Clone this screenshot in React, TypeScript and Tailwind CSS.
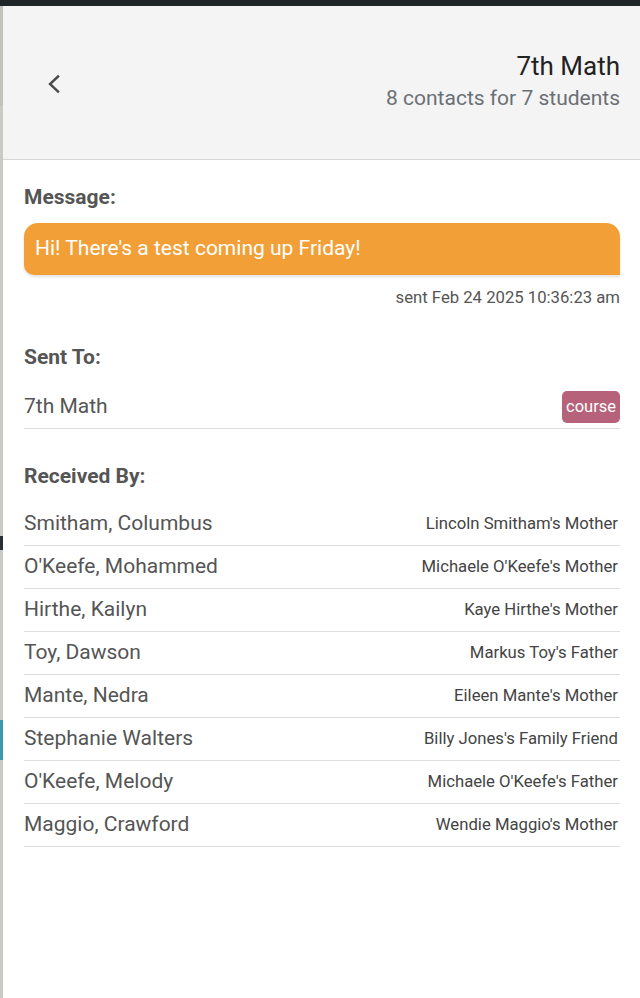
import React from 'react';

interface Recipient {
  name: string;
  relation: string;
}

const recipients: Recipient[] = [
  { name: 'Smitham, Columbus', relation: "Lincoln Smitham's Mother" },
  { name: "O'Keefe, Mohammed", relation: "Michaele O'Keefe's Mother" },
  { name: 'Hirthe, Kailyn', relation: "Kaye Hirthe's Mother" },
  { name: 'Toy, Dawson', relation: "Markus Toy's Father" },
  { name: 'Mante, Nedra', relation: "Eileen Mante's Mother" },
  { name: 'Stephanie Walters', relation: "Billy Jones's Family Friend" },
  { name: "O'Keefe, Melody", relation: "Michaele O'Keefe's Father" },
  { name: 'Maggio, Crawford', relation: "Wendie Maggio's Mother" },
];

const BackChevron: React.FC = () => (
  <svg width="14" height="20" viewBox="0 0 14 20" fill="none">
    <polyline
      points="11,2.5 3,10 11,17.5"
      stroke="#4a4a4a"
      strokeWidth="2.4"
      strokeLinecap="square"
      strokeLinejoin="miter"
    />
  </svg>
);

const App: React.FC = () => {
  return (
    <div className="w-[640px] h-[998px] flex flex-col bg-white overflow-hidden font-['Roboto','Liberation_Sans',sans-serif]">
      {/* window top bar */}
      <div className="h-[6px] shrink-0 bg-[#1f2426]" />

      <div className="flex flex-1 min-h-0">
        {/* sliver of the page behind the panel */}
        <div className="w-[3px] shrink-0 flex flex-col bg-[#c9c9c6]">
          <div className="h-[100px] bg-[#c2c2b8]" />
          <div className="h-[430px]" />
          <div className="h-[14px] bg-[#2a2f33]" />
          <div className="h-[170px]" />
          <div className="h-[40px] bg-[#3a97ad]" />
        </div>

        <div className="flex-1 flex flex-col">
          {/* header */}
          <div className="h-[154px] shrink-0 bg-[#f4f4f4] border-b border-[#d6d6d6] flex items-center justify-between pl-[44px] pr-5 pt-[2px]">
            <button className="flex items-center">
              <BackChevron />
            </button>
            <div className="flex flex-col items-end -mt-[3px]">
              <h1 className="text-[26px] leading-[32px] text-[#222]">7th Math</h1>
              <p className="text-[21px] leading-[32px] text-[#6b7075]">8 contacts for 7 students</p>
            </div>
          </div>

          {/* body */}
          <div className="pl-[21px] pr-5 pt-[25px]">
            <h2 className="text-[21px] leading-6 font-bold text-[#555]">Message:</h2>
            <div className="mt-[14px] h-[52px] flex items-center px-[11px] bg-[#f29f38] rounded-tl-[14px] rounded-tr-[14px] rounded-bl-[10px] shadow-[0_2px_3px_rgba(0,0,0,0.12)]">
              <span className="text-[21px] text-white">Hi! There's a test coming up Friday!</span>
            </div>
            <p className="mt-[13px] text-right text-[16.7px] leading-5 text-[#555]">sent Feb 24 2025 10:36:23 am</p>

            <h2 className="mt-[37px] text-[21px] leading-6 font-bold text-[#555]">Sent To:</h2>
            <div className="mt-[17px] h-[43px] flex items-center justify-between border-b border-[#dedede]">
              <span className="text-[21px] text-[#555]">7th Math</span>
              <span className="h-[32px] px-[4px] flex items-center rounded-[5px] bg-[#b5627a] text-white text-[16.5px]">course</span>
            </div>

            <h2 className="mt-[35px] text-[21px] leading-6 font-bold text-[#555]">Received By:</h2>
            <ul className="mt-[15px]">
              {recipients.map((r) => (
                <li key={r.name} className="h-[43px] flex items-center justify-between border-b border-[#dedede] pr-[2px]">
                  <span className="text-[21px] text-[#555]">{r.name}</span>
                  <span className="text-[16.7px] text-[#444]">{r.relation}</span>
                </li>
              ))}
            </ul>
          </div>
        </div>
      </div>
    </div>
  );
};

export default App;
